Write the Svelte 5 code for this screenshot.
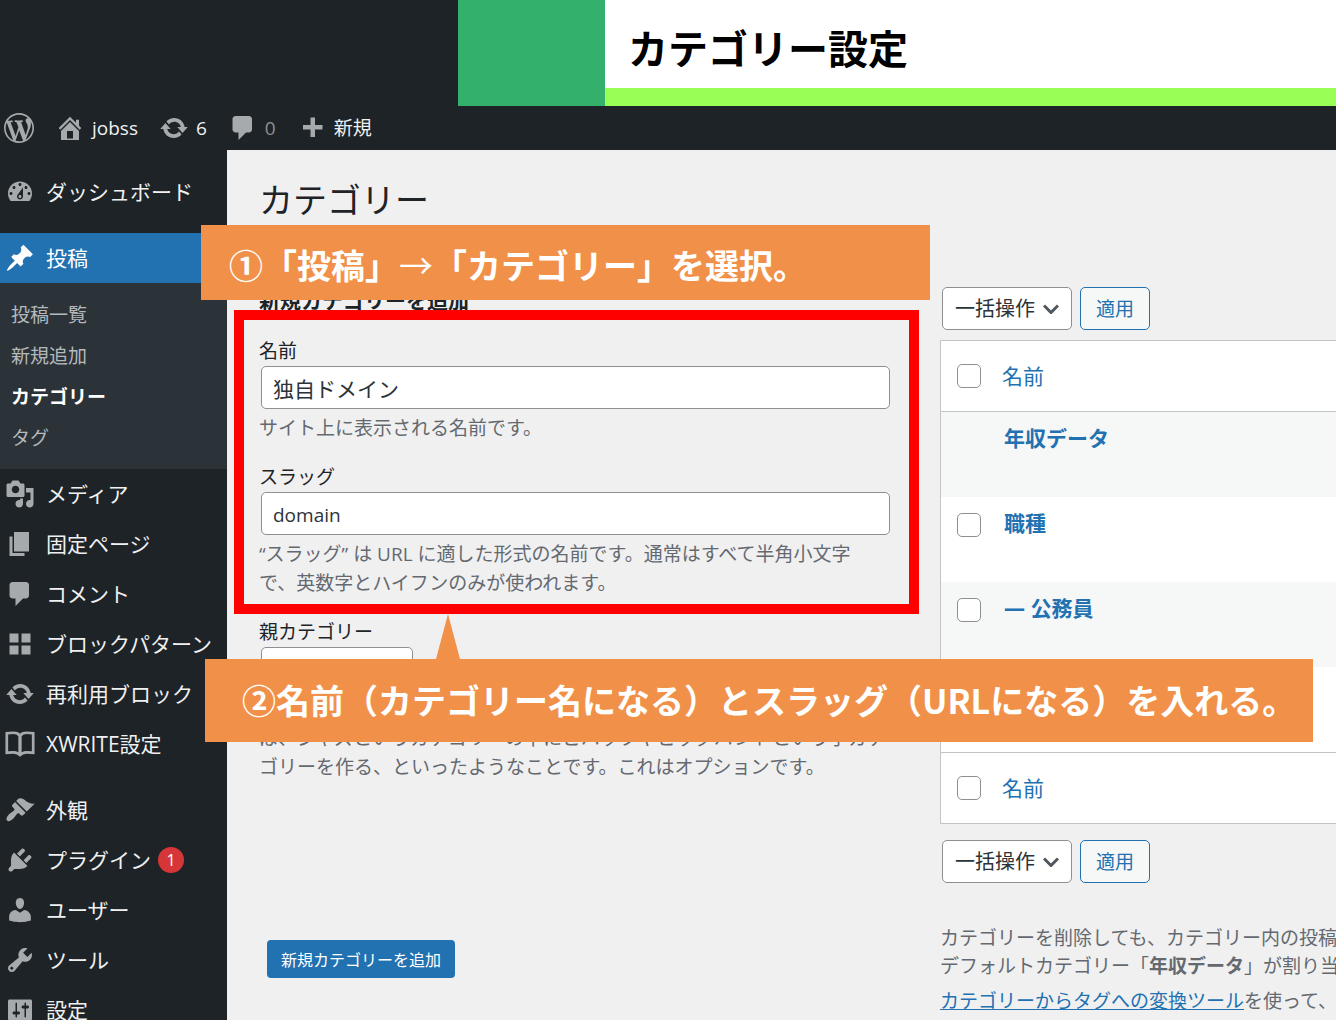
<script lang="ts">
  interface MenuItem {
    label: string;
    icon: string;
    active?: boolean;
    badge?: number;
    submenu?: string[];
    gapBefore?: boolean;
  }

  // 20x20 icon outlines
  const ICONS: Record<string, string> = {
    wordpress:
      'M20 10c0-5.51-4.49-10-10-10C4.48 0 0 4.49 0 10c0 5.52 4.48 10 10 10 5.51 0 10-4.48 10-10zM7.78 15.37L4.37 6.22c.55-.02 1.17-.08 1.17-.08.5-.06.44-1.13-.06-1.11 0 0-1.45.11-2.37.11-.18 0-.37 0-.58-.01C4.12 2.69 6.87 1.11 10 1.11c2.33 0 4.45.87 6.05 2.34-.68-.11-1.65.39-1.65 1.58 0 .74.45 1.36.9 2.1.35.61.55 1.36.55 2.46 0 1.49-1.4 5-1.4 5l-3.03-8.37c.54-.02.82-.17.82-.17.5-.05.44-1.25-.06-1.22 0 0-1.44.12-2.38.12-.87 0-2.33-.12-2.33-.12-.5-.03-.56 1.2-.06 1.22l.92.08 1.26 3.41zM17.41 10c.24-.64.74-1.87.43-4.25.7 1.29 1.05 2.71 1.05 4.25 0 3.29-1.73 6.24-4.4 7.78.97-2.59 1.94-5.2 2.92-7.78zM6.1 18.09C3.12 16.65 1.11 13.53 1.11 10c0-1.3.23-2.48.72-3.59C3.25 10.3 4.67 14.2 6.1 18.09zm4.03-6.63l2.58 6.98c-.86.29-1.76.45-2.71.45-.79 0-1.57-.11-2.29-.33.81-2.38 1.62-4.74 2.42-7.1z',
    home: 'M16 8.5l1.53 1.53-1.06 1.06L10 4.6l-6.47 6.49-1.06-1.06L10 2.5l4 4v-2h2v4zm-6-2.46l6 5.99V18H4v-5.97zM12 17v-5H8v5h4z',
    update:
      'M10.2 3.28c3.53 0 6.43 2.61 6.92 6h2.08l-3.5 4-3.5-4h2.32c-.45-1.97-2.21-3.45-4.32-3.45-1.45 0-2.73.71-3.54 1.78L4.95 5.66C6.23 4.2 8.11 3.28 10.2 3.28zm-.4 13.44c-3.52 0-6.43-2.61-6.92-6H.8l3.5-4c1.17 1.33 2.33 2.67 3.5 4H5.48c.45 1.97 2.21 3.45 4.32 3.45 1.45 0 2.73-.71 3.54-1.78l1.71 1.95c-1.28 1.46-3.15 2.38-5.25 2.38z',
    comment:
      'M5 2h9c1.1 0 2 .9 2 2v7c0 1.1-.9 2-2 2h-2l-5 5v-5H5c-1.1 0-2-.9-2-2V4c0-1.1.9-2 2-2z',
    plus: 'M17 8v3h-5v5H9v-5H4V8h5V3h3v5h5z',
    dashboard:
      'M3.76 16h12.48c1.1-1.37 1.76-3.11 1.76-5 0-4.42-3.58-8-8-8s-8 3.58-8 8c0 1.89.66 3.63 1.76 5zM10 4c.55 0 1 .45 1 1s-.45 1-1 1-1-.45-1-1 .45-1 1-1zM6 6c.55 0 1 .45 1 1s-.45 1-1 1-1-.45-1-1 .45-1 1-1zm8 0c.55 0 1 .45 1 1s-.45 1-1 1-1-.45-1-1 .45-1 1-1zm-5.37 5.55L12 7v6c0 1.1-.9 2-2 2s-2-.9-2-2c0-.57.24-1.08.63-1.45zM4 10c.55 0 1 .45 1 1s-.45 1-1 1-1-.45-1-1 .45-1 1-1zm12 0c.55 0 1 .45 1 1s-.45 1-1 1-1-.45-1-1 .45-1 1-1zm-5 3c0-.55-.45-1-1-1s-1 .45-1 1 .45 1 1 1 1-.45 1-1z',
    pin: 'M10.44 3.02l1.82-1.82 6.36 6.35-1.83 1.82c-1.05-.68-2.48-.57-3.41.36l-.75.75c-.92.93-1.04 2.35-.35 3.41l-1.83 1.82-2.41-2.41-2.8 2.79c-.42.42-3.38 2.71-3.8 2.29s1.86-3.39 2.28-3.81l2.79-2.79L4.1 9.36l1.83-1.82c1.05.69 2.48.57 3.4-.36l.75-.75c.93-.92 1.05-2.35.36-3.41z',
    media:
      'M13 11V4c0-.55-.45-1-1-1h-1.67L9 1H5L3.67 3H2c-.55 0-1 .45-1 1v7c0 .55.45 1 1 1h10c.55 0 1-.45 1-1zM7 4.5c1.38 0 2.5 1.12 2.5 2.5S8.38 9.5 7 9.5 4.5 8.38 4.5 7 5.62 4.5 7 4.5zM14 6h5v10.5c0 1.38-1.12 2.5-2.5 2.5S14 17.88 14 16.5s1.12-2.5 2.5-2.5c.17 0 .34.02.5.05V9h-3V6zm-4 8.05V13h2v3.5c0 1.38-1.12 2.5-2.5 2.5S7 17.88 7 16.5 8.12 14 9.5 14c.17 0 .34.02.5.05z',
    page: 'M6 15V2h10v13H6zm-1 1h8v2H3V5h2v11z',
    blocks: 'M9 9V3H3v6h6zm8 0V3h-6v6h6zm-8 8v-6H3v6h6zm8 0v-6h-6v6h6z',
    book: 'M.3 2l5.200-.400q3.300 0 4.500 1.600 1.200-1.600 4.500-1.600l5.200.400v14.800l-5.200-.300q-2.600.100-4.500 2-1.900-1.900-4.500-2l-5.200.300zM2.100 3.700v11.200l3.500-.300q1.900 0 3.300.900V4.800q-.900-1.400-3.400-1.400zM11.100 4.800v10.700q1.400-.900 3.300-.900l3.500.300V3.700l-3.400-.300q-2.500 0-3.400 1.400z',
    brush:
      'M14.48 11.06L7.41 3.99l1.5-1.5c.5-.56 2.3-.47 3.51.32 1.21.8 1.43 1.28 2.91 2.1 1.18.64 2.45 1.26 4.45.85zm-.71.71L6.7 4.7 4.93 6.47c-.39.39-.39 1.02 0 1.41l1.06 1.06c.39.39.39 1.03 0 1.42-.6.6-1.43 1.11-2.21 1.69-.35.26-.7.53-1.01.84C1.43 14.23.4 16.08 1.4 17.07c.99 1 2.84-.03 4.18-1.36.31-.31.58-.66.85-1.02.57-.78 1.08-1.61 1.69-2.21.39-.39 1.02-.39 1.41 0l1.06 1.06c.39.39 1.02.39 1.41 0z',
    plug: 'M13.11 4.36L9.87 7.6 8 5.73l3.24-3.24c.35-.34 1.05-.2 1.56.32.52.51.66 1.21.31 1.55zm-8 1.77l.91-1.12 9.01 9.01-1.19.84c-.71.71-2.63 1.16-3.82 1.16H6.14L4.9 17.26c-.59.59-1.54.59-2.12 0-.59-.58-.59-1.53 0-2.12l1.24-1.24v-3.88c0-1.13.4-3.19 1.09-3.89zm7.26 3.97l3.24-3.24c.34-.35 1.04-.21 1.55.31.52.51.66 1.21.31 1.55l-3.24 3.25z',
    user: 'M10 9.25c-2.27 0-2.73-3.44-2.73-3.44C7 4.02 7.82 2 9.97 2c2.16 0 2.98 2.02 2.71 3.81 0 0-.41 3.44-2.68 3.44zm0 2.57L12.72 10c2.39 0 4.52 2.33 4.52 4.53v2.49s-3.65 1.13-7.24 1.13c-3.65 0-7.24-1.13-7.24-1.13v-2.49c0-2.25 1.94-4.48 4.47-4.48z',
    wrench:
      'M16.68 9.77c-1.34 1.34-3.3 1.67-4.95.99l-5.41 6.52c-.99.99-2.59.99-3.58 0s-.99-2.59 0-3.57l6.52-5.42c-.68-1.65-.35-3.61.99-4.95 1.28-1.28 3.12-1.62 4.72-1.06l-2.89 2.89 2.82 2.82 2.86-2.87c.53 1.58.18 3.39-1.08 4.65zM3.81 16.21c.4.39 1.04.39 1.43 0 .4-.4.4-1.04 0-1.43-.39-.4-1.03-.4-1.43 0-.39.39-.39 1.03 0 1.43z',
    sliders:
      'M18 16V4c0-.55-.45-1-1-1H3c-.55 0-1 .45-1 1v12c0 .55.45 1 1 1h14c.55 0 1-.45 1-1zM8 11h1c.55 0 1 .45 1 1s-.45 1-1 1H8v1.5c0 .28-.22.5-.5.5s-.5-.22-.5-.5V13H6c-.55 0-1-.45-1-1s.45-1 1-1h1V5.5c0-.28.22-.5.5-.5s.5.22.5.5V11zm5-2h-1c-.55 0-1-.45-1-1s.45-1 1-1h1V5.5c0-.28.22-.5.5-.5s.5.22.5.5V7h1c.55 0 1 .45 1 1s-.45 1-1 1h-1v5.5c0 .28-.22.5-.5.5s-.5-.22-.5-.5V9z',
  };

  const menu: MenuItem[] = [
    { label: 'ダッシュボード', icon: 'dashboard' },
    {
      label: '投稿',
      icon: 'pin',
      active: true,
      gapBefore: true,
      submenu: ['投稿一覧', '新規追加', 'カテゴリー', 'タグ'],
    },
    { label: 'メディア', icon: 'media' },
    { label: '固定ページ', icon: 'page' },
    { label: 'コメント', icon: 'comment' },
    { label: 'ブロックパターン', icon: 'blocks' },
    { label: '再利用ブロック', icon: 'update' },
    { label: 'XWRITE設定', icon: 'book' },
    { label: '外観', icon: 'brush', gapBefore: true },
    { label: 'プラグイン', icon: 'plug', badge: 1 },
    { label: 'ユーザー', icon: 'user' },
    { label: 'ツール', icon: 'wrench' },
    { label: '設定', icon: 'sliders' },
  ];

  const currentSub = 'カテゴリー';

  const rows = [
    { name: '年収データ', selectable: false },
    { name: '職種', selectable: true },
    { name: '— 公務員', selectable: true },
    { name: '', selectable: true },
  ];

  let name = $state('独自ドメイン');
  let slug = $state('domain');
</script>

{#snippet icon(id: string)}
  <svg class="icon" viewBox="0 0 20 20" aria-hidden="true">
    <path d={ICONS[id]} fill-rule="evenodd" />
  </svg>
{/snippet}

{#snippet bulkActions(where: string)}
  <div class="bulk">
    <select class="select bulk-select" aria-label="一括操作" id="bulk-{where}">
      <option>一括操作</option>
    </select>
    <button class="apply" type="button">適用</button>
  </div>
{/snippet}

<div class="page">
  <header class="banner">
    <div class="banner-block"></div>
    <div class="banner-title">カテゴリー設定</div>
  </header>

  <nav class="adminbar">
    <a href="#wp" aria-label="WordPress">{@render icon('wordpress')}</a>
    <a href="#site">{@render icon('home')}<span>jobss</span></a>
    <a href="#updates">{@render icon('update')}<span>6</span></a>
    <a href="#comments" class="muted">{@render icon('comment')}<span>0</span></a>
    <a href="#new">{@render icon('plus')}<span>新規</span></a>
  </nav>

  <div class="body">
    <nav class="sidebar">
      {#each menu as item}
        <a
          href="#menu"
          class="menu-item"
          class:menu-item--active={item.active}
          class:menu-item--gap={item.gapBefore}
        >
          {@render icon(item.icon)}
          <span>{item.label}</span>
          {#if item.badge}<span class="badge">{item.badge}</span>{/if}
        </a>
        {#if item.submenu}
          <div class="submenu">
            {#each item.submenu as sub}
              <a href="#sub" class:current={sub === currentSub}>{sub}</a>
            {/each}
          </div>
        {/if}
      {/each}
    </nav>

    <main class="main">
      <h1>カテゴリー</h1>

      <div class="columns">
        <form class="add-form">
          <h2>新規カテゴリーを追加</h2>

          <div class="field">
            <label for="name">名前</label>
            <input id="name" type="text" bind:value={name} />
            <p>サイト上に表示される名前です。</p>
          </div>

          <div class="field">
            <label for="slug">スラッグ</label>
            <input id="slug" class="latin" type="text" bind:value={slug} />
            <p>
              “スラッグ” は URL に適した形式の名前です。通常はすべて半角小文字<br />で、英数字とハイフンのみが使われます。
            </p>
          </div>

          <div class="field">
            <label for="parent">親カテゴリー</label>
            <select id="parent" class="select parent-select">
              <option>なし</option>
            </select>
            <p>
              カテゴリーはタグとは異なり、階層構造を持つことができます。たとえ<br />ば、ジャズというカテゴリーの下にビバップやビッグバンドという子カテ<br />ゴリーを作る、といったようなことです。これはオプションです。
            </p>
          </div>

          <button class="submit" type="button">新規カテゴリーを追加</button>
        </form>

        <section class="list">
          {@render bulkActions('top')}

          <table>
            <thead>
              <tr>
                <td class="check"><input type="checkbox" aria-label="すべて選択" /></td>
                <th><a href="#sort">名前</a></th>
              </tr>
            </thead>
            <tbody>
              {#each rows as row}
                <tr>
                  <td class="check">
                    {#if row.selectable}<input type="checkbox" aria-label="選択" />{/if}
                  </td>
                  <td class="name"><a href="#edit">{row.name}</a></td>
                </tr>
              {/each}
            </tbody>
            <tfoot>
              <tr>
                <td class="check"><input type="checkbox" aria-label="すべて選択" /></td>
                <th><a href="#sort">名前</a></th>
              </tr>
            </tfoot>
          </table>

          {@render bulkActions('bottom')}

          <div class="notes">
            <p>
              カテゴリーを削除しても、カテゴリー内の投稿は削除されません。<br />デフォルトカテゴリー「<strong>年収データ</strong>」が割り当てられます。
            </p>
            <p><a href="#convert">カテゴリーからタグへの変換ツール</a>を使って、</p>
          </div>
        </section>
      </div>
    </main>
  </div>

  <!-- Walkthrough annotations on top of the admin screen -->
  <div class="frame"></div>
  <div class="callout callout--first">①「投稿」<span>→</span>「カテゴリー」を選択。</div>
  <div class="callout callout--second">②名前（カテゴリー名になる）とスラッグ（URLになる）を入れる。</div>
</div>

<style>
  :global(body) {
    background: #f0f0f1;
  }

  .page {
    position: relative;
    height: 100vh;
    overflow: hidden;
    display: flex;
    flex-direction: column;
    font-family: 'Open Sans', 'Noto Sans CJK JP', sans-serif;
    font-size: 19px;
    line-height: 29px;
    color: #1d2327;
    white-space: nowrap;
  }

  .page * {
    box-sizing: border-box;
  }

  a {
    text-decoration: none;
    color: #2271b1;
  }

  .icon {
    width: 30px;
    height: 30px;
    flex: none;
    fill: #a7aaad;
  }

  /* Banner */
  .banner {
    flex: none;
    display: flex;
    height: 106px;
    padding-left: 458px;
    background: #1d2327;
  }

  .banner-block {
    width: 147px;
    background: #33b16c;
  }

  .banner-title {
    flex: 1;
    padding: 18px 0 0 23px;
    border-bottom: 18px solid #99ff55;
    background: #fff;
    color: #000;
    font-family: 'Noto Sans CJK JP', sans-serif;
    font-size: 40px;
    line-height: 58px;
    font-weight: 700;
  }

  /* Admin bar */
  .adminbar {
    flex: none;
    display: flex;
    gap: 21px;
    height: 44px;
    padding-left: 4px;
    background: #1d2327;
  }

  .adminbar a {
    display: flex;
    align-items: center;
    gap: 7px;
    color: #f0f0f1;
  }

  .adminbar .muted {
    color: #8c8f94;
  }

  .body {
    flex: 1;
    display: flex;
    min-height: 0;
  }

  /* Sidebar */
  .sidebar {
    flex: none;
    width: 227px;
    padding-top: 17px;
    background: #1d2327;
  }

  .menu-item {
    display: flex;
    align-items: center;
    gap: 11px;
    height: 50px;
    padding-left: 5px;
    color: #f0f0f1;
    font-size: 21px;
  }

  .menu-item--gap {
    margin-top: 16px;
  }

  .menu-item--active {
    background: #2271b1;
    color: #fff;
  }

  .menu-item--active .icon {
    fill: #fff;
  }

  .badge {
    width: 26px;
    height: 26px;
    margin-left: -4px;
    border-radius: 50%;
    background: #d63638;
    color: #fff;
    font-size: 16px;
    line-height: 26px;
    text-align: center;
  }

  .submenu {
    padding: 12px 0 10px 11px;
    background: #2c3338;
  }

  .submenu a {
    display: block;
    line-height: 41px;
    color: #b4b9be;
  }

  .submenu .current {
    color: #fff;
    font-weight: 700;
  }

  /* Main */
  .main {
    flex: 1;
    min-width: 0;
    padding: 30px 0 0 32px;
    background: #f0f0f1;
  }

  h1 {
    margin: 0 0 65px;
    font-size: 34px;
    line-height: 40px;
    font-weight: 400;
  }

  .columns {
    display: grid;
    grid-template-columns: minmax(0, 632fr) minmax(0, 396fr);
    gap: 49px;
  }

  h2 {
    margin: 0 0 22px;
    font-size: 21px;
    line-height: 30px;
    font-weight: 700;
  }

  .field {
    margin-bottom: 20px;
  }

  .field label {
    display: block;
  }

  .field p {
    margin: 5px 0 0;
    color: #646970;
  }

  input[type='text'],
  .select {
    height: 43px;
    border: 1px solid #8c8f94;
    border-radius: 5px;
    background-color: #fff;
    color: #2c3338;
    font-family: inherit;
    font-size: 21px;
  }

  input[type='text'] {
    display: block;
    width: calc(100% - 3px);
    margin-left: 2px;
    padding: 0 11px;
  }

  input.latin {
    padding-top: 3px;
    font-size: 19px;
  }

  .select {
    appearance: none;
    padding: 0 12px;
    background-image: url("data:image/svg+xml,%3Csvg xmlns='http://www.w3.org/2000/svg' viewBox='0 0 16 10'%3E%3Cpath d='M1 1.500l7 7 7-7' fill='none' stroke='%2350575e' stroke-width='3'/%3E%3C/svg%3E");
    background-repeat: no-repeat;
    background-position: right 12px center;
    background-size: 16px 10px;
  }

  .parent-select {
    display: block;
    width: 152px;
    margin-left: 2px;
  }

  .submit {
    height: 38px;
    margin: 138px 0 0 8px;
    padding: 0 14px;
    border: none;
    border-radius: 4px;
    background: #2271b1;
    color: #fff;
    font-family: inherit;
    font-size: 16px;
  }

  /* Category list */
  .list {
    padding-top: 2px;
  }

  .bulk {
    display: flex;
    gap: 8px;
    padding-left: 2px;
  }

  .bulk-select {
    width: 130px;
    font-size: 20px;
  }

  .apply {
    width: 70px;
    padding: 0 0 2px;
    border: 1px solid #2271b1;
    border-radius: 5px;
    background: #f6f7f7;
    color: #2271b1;
    font-family: inherit;
    font-size: 19px;
  }

  table {
    width: 100%;
    margin: 10px 0 16px;
    border: 1px solid #c3c4c7;
    border-right: none;
    border-spacing: 0;
    background: #fff;
    font-size: 21px;
  }

  th,
  td {
    padding: 0;
    text-align: left;
    vertical-align: middle;
    font-weight: 400;
  }

  thead tr > *,
  tfoot tr > * {
    height: 71px;
  }

  thead tr > * {
    border-bottom: 1px solid #c3c4c7;
  }

  tfoot tr > * {
    border-top: 1px solid #c3c4c7;
  }

  tbody td {
    height: 85px;
    padding-top: 12px;
    vertical-align: top;
  }

  tbody tr:nth-child(odd) {
    background: #f6f7f7;
  }

  .check {
    width: 61px;
    padding-left: 16px;
  }

  tbody .check {
    padding-top: 16px;
  }

  input[type='checkbox'] {
    appearance: none;
    display: block;
    width: 24px;
    height: 24px;
    margin: 0;
    border: 1px solid #8c8f94;
    border-radius: 5px;
    background: #fff;
  }

  .name {
    padding-left: 2px;
  }

  .name a {
    font-weight: 700;
  }

  .notes {
    margin-top: 41px;
    line-height: 28px;
    color: #646970;
  }

  .notes p {
    margin: 0 0 7px;
  }

  .notes a {
    text-decoration: underline;
  }

  /* Annotations */
  .frame {
    position: absolute;
    top: 310px;
    left: 234px;
    width: 685px;
    height: 304px;
    border: 10px solid #f00;
    pointer-events: none;
  }

  .callout {
    position: absolute;
    background: #f19149;
    color: #fff;
    font-family: 'Noto Sans CJK JP', sans-serif;
    font-size: 34px;
    font-weight: 700;
  }

  .callout span {
    font-weight: 400;
  }

  .callout--first {
    top: 225px;
    left: 201px;
    width: 729px;
    height: 75px;
    padding: 2px 0 0 28px;
    line-height: 75px;
  }

  .callout--second {
    top: 659px;
    left: 205px;
    width: 1108px;
    height: 83px;
    padding-left: 37px;
    line-height: 81px;
  }

  /* Pointer reaching up to the red frame */
  .callout--second::before {
    content: '';
    position: absolute;
    bottom: 100%;
    left: 231px;
    width: 24px;
    height: 45px;
    background: #f19149;
    clip-path: polygon(50% 0, 100% 100%, 0 100%);
  }
</style>
